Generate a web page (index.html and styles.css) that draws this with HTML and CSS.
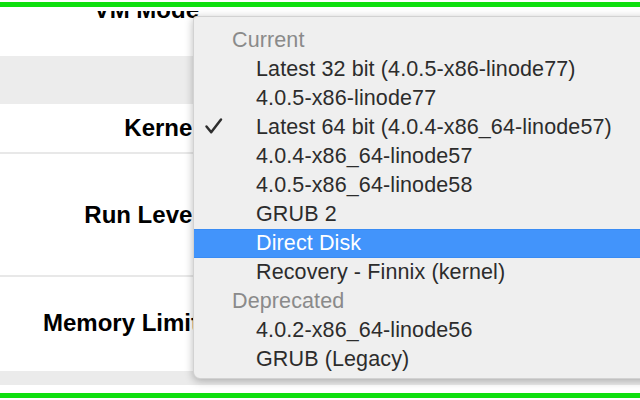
FILE: index.html
```html
<!DOCTYPE html>
<html>
<head>
<meta charset="utf-8">
<link rel="stylesheet" href="styles.css">
</head>
<body>
<div class="page">
  <div class="green"></div>
  <div class="gap-top"></div>
  <div class="viewport">
    <div class="row row-vm"><div class="label label-vm">VM Mode</div></div>
    <div class="row row-band"></div>
    <div class="row row-kernel"><div class="label">Kernel</div></div>
    <div class="row row-run"><div class="label">Run Level</div></div>
    <div class="row row-mem"><div class="label">Memory Limit</div></div>
    <div class="row row-band-bottom"></div>
  </div>
  <div class="gap-bottom"></div>
  <div class="green"></div>
</div>

<div class="menu">
  <div class="item header">Current</div>
  <div class="item">Latest 32 bit (4.0.5-x86-linode77)</div>
  <div class="item">4.0.5-x86-linode77</div>
  <div class="item checked">
    <svg class="check" width="20" height="20" viewBox="0 0 20 20"><path d="M2.5 9.5 L7.2 15.2 L17 2.5" fill="none" stroke="#2e2e2e" stroke-width="2.5" stroke-linecap="round" stroke-linejoin="round"/></svg>
    Latest 64 bit (4.0.4-x86_64-linode57)
  </div>
  <div class="item">4.0.4-x86_64-linode57</div>
  <div class="item">4.0.5-x86_64-linode58</div>
  <div class="item">GRUB 2</div>
  <div class="item selected">Direct Disk</div>
  <div class="item">Recovery - Finnix (kernel)</div>
  <div class="item header">Deprecated</div>
  <div class="item">4.0.2-x86_64-linode56</div>
  <div class="item">GRUB (Legacy)</div>
</div>
</body>
</html>
```

FILE: styles.css
```css
html, body {
  margin: 0;
  padding: 0;
}
body {
  width: 640px;
  height: 400px;
  overflow: hidden;
  background: #ffffff;
  position: relative;
  font-family: "Liberation Sans", Arial, sans-serif;
}
.page {
  display: flex;
  flex-direction: column;
  padding-top: 2px;
}
.green {
  height: 5px;
  background: #0fdf0f;
}
.gap-top {
  height: 4px;
}
.gap-bottom {
  height: 8px;
}
.viewport {
  height: 374px;
  overflow: hidden;
  display: flex;
  flex-direction: column;
}
.row {
  display: flex;
  align-items: center;
  flex-shrink: 0;
}
.label {
  width: 199px;
  text-align: right;
  font-weight: bold;
  font-size: 24px;
  line-height: 26px;
  color: #000;
}
.row-vm {
  height: 45px;
  align-items: flex-start;
}
.label-vm {
  margin-top: -14px;
}
.row-band {
  height: 48px;
  background: #ececec;
}
.row-kernel {
  height: 48px;
  border-bottom: 2px solid #e8e8e8;
}
.row-run {
  height: 121px;
  border-bottom: 2px solid #e8e8e8;
}
.row-mem {
  height: 94px;
  padding-bottom: 3px;
  box-sizing: border-box;
}
.row-band-bottom {
  height: 14px;
  background: #ebebeb;
}

.menu {
  position: absolute;
  left: 193px;
  top: 16px;
  width: 470px;
  height: 363px;
  box-sizing: border-box;
  padding: 9px 0 6px 0;
  background: #efefef;
  border: 1px solid rgba(0, 0, 0, 0.12);
  border-radius: 4px 0 0 7px;
  box-shadow: 0 2px 8px rgba(0, 0, 0, 0.28);
  display: flex;
  flex-direction: column;
}
.item {
  height: 29px;
  flex-shrink: 0;
  display: flex;
  align-items: center;
  padding-left: 62px;
  font-size: 21.5px;
  letter-spacing: 0.12px;
  color: #2c2c2c;
  position: relative;
  white-space: nowrap;
}
.item.header {
  padding-left: 38px;
  color: #8a8a8a;
}
.item.selected {
  background: #4294fb;
  color: #ffffff;
  box-shadow: inset 0 1px 0 #3a8cf4, inset 0 -1px 0 #3a8cf4;
}
.check {
  position: absolute;
  left: 10px;
  top: 4px;
}
```
